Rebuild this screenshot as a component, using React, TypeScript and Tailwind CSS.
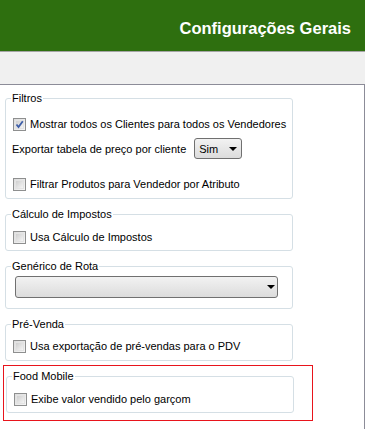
import type { ReactNode } from 'react';

const font = { fontFamily: '"Liberation Sans", Arial, sans-serif' };

function CheckBox({ checked = false }: { checked?: boolean }) {
  return (
    <span className="relative inline-flex h-[13px] w-[13px] shrink-0 items-center justify-center border border-[#8e8f8f] bg-gradient-to-br from-[#dcdcdc] to-[#f6f6f6]">
      <span className="h-[9px] w-[9px] border border-[#e3e3e3] bg-gradient-to-br from-[#cfcfcf] to-[#f4f4f4]" />
      {checked && (
        <svg className="absolute left-[1px] top-[1px]" width="9" height="9" viewBox="0 0 9 9">
          <path d="M1.5 4.5 L3.5 7 L7.8 1.2" fill="none" stroke="#3e5ea8" strokeWidth="1.8" />
        </svg>
      )}
    </span>
  );
}

function CheckRow({ label, checked, className }: { label: string; checked?: boolean; className?: string }) {
  return (
    <div className={`flex h-4 items-center gap-[4px] pl-[2px] ${className ?? ''}`}>
      <CheckBox checked={checked} />
      <span className="whitespace-nowrap text-[11px] leading-4 text-black">{label}</span>
    </div>
  );
}

function Group({ title, className, children }: { title: string; className?: string; children: ReactNode }) {
  return (
    <fieldset className={`w-[288px] rounded-[3px] border border-[#d5dfe5] px-[5px] ${className ?? ''}`}>
      <legend className="whitespace-nowrap px-px text-[11px] leading-[14px] text-black">{title}</legend>
      {children}
    </fieldset>
  );
}

function Arrow() {
  return (
    <svg width="8" height="4" viewBox="0 0 8 4">
      <path d="M0 0 H8 L4 4 Z" fill="#000" />
    </svg>
  );
}

export default function App() {
  return (
    <div className="w-[365px] h-[429px] overflow-hidden bg-white" style={font}>
      {/* Header */}
      <div className="flex h-[51px] items-center justify-end bg-[#2e6f0f] pr-[14px] pt-[5px]">
        <h1 className="whitespace-nowrap text-[16.5px] font-bold text-white">Configurações Gerais</h1>
      </div>
      <div className="h-[33px] border-t border-[#a5a5a5] bg-[#f0f0f0]" />

      {/* Content */}
      <div className="h-[345px] border-t border-r border-[#8c8c98] pl-[5px] pt-[6px]">
        <Group title="Filtros" className="pb-[6px]">
          <CheckRow className="mt-[11px]" checked label="Mostrar todos os Clientes para todos os Vendedores" />
          <div className="mt-[6px] flex h-[21px] items-center pl-px">
            <span className="whitespace-nowrap text-[11px] leading-4 text-black">Exportar tabela de preço por cliente</span>
            <div className="ml-[8px] flex h-[21px] w-[48px] items-center justify-between rounded-[3px] border border-[#707070] bg-gradient-to-b from-[#f2f2f2] to-[#dcdcdc] pl-[4px] pr-[4px]">
              <span className="text-[11px] leading-4 text-black">Sim</span>
              <Arrow />
            </div>
          </div>
          <CheckRow className="mt-[17px]" label="Filtrar Produtos para Vendedor por Atributo" />
        </Group>

        <Group title="Cálculo de Impostos" className="mt-[8px] pb-[5px]">
          <CheckRow className="mt-[8px]" label="Usa Cálculo de Impostos" />
        </Group>

        <Group title="Genérico de Rota" className="mt-[8px] pb-[10px]">
          <div className="ml-[4px] mt-[3px] flex h-[22px] w-[263px] items-center justify-end rounded-[3px] border border-[#707070] bg-gradient-to-b from-[#f2f2f2] to-[#dcdcdc] pr-[2px]">
            <Arrow />
          </div>
        </Group>

        <Group title="Pré-Venda" className="mt-[8px] pb-[6px]">
          <CheckRow className="mt-[7px]" label="Usa exportação de pré-vendas para o PDV" />
        </Group>

        <div className="-ml-[2px] mt-[4px] w-[310px] border border-[#e8141c] pl-[2px] pt-[3px] pb-[7px]">
          <Group title="Food Mobile" className="w-[287px] pb-[5px]">
            <CheckRow className="mt-[8px]" label="Exibe valor vendido pelo garçom" />
          </Group>
        </div>
      </div>
    </div>
  );
}
